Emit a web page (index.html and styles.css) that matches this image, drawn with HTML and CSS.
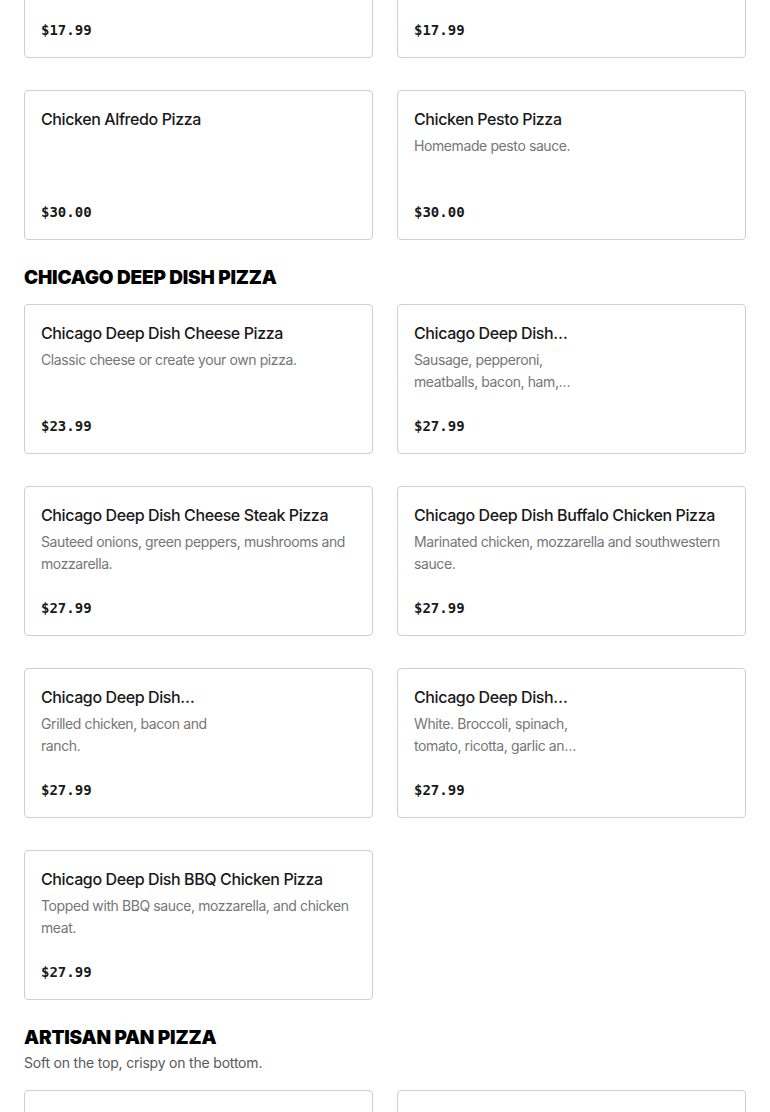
FILE: index.html
```html
<!doctype html>
<html lang="en">
<head>
    <meta charset="UTF-8">
    <meta name="viewport" content="width=device-width, initial-scale=1.0">
    <title>Menu</title>
    <link rel="stylesheet" href="styles.css">
</head>
<body>
<div class="menu">
    <div class="section">
        <div class="grid">
            <div class="item">
                <div class="item-text">
                    <div class="item-name">Veggie Pizza</div>
                    <div class="item-desc">Peppers, onions and olives.</div>
                    <div class="item-price">$17.99</div>
                </div>
            </div>
            <div class="item">
                <div class="item-text">
                    <div class="item-name">Hawaiian Pizza</div>
                    <div class="item-desc">Ham and pineapple.</div>
                    <div class="item-price">$17.99</div>
                </div>
            </div>
            <div class="item">
                <div class="item-text">
                    <div class="item-name">Chicken Alfredo Pizza</div>
                    <div class="item-price">$30.00</div>
                </div>
            </div>
            <div class="item">
                <div class="item-text">
                    <div class="item-name">Chicken Pesto Pizza</div>
                    <div class="item-desc">Homemade pesto sauce.</div>
                    <div class="item-price">$30.00</div>
                </div>
            </div>
        </div>
    </div>

    <div class="section">
        <h2 class="section-title">CHICAGO DEEP DISH PIZZA</h2>
        <div class="grid">
            <div class="item">
                <div class="item-text">
                    <div class="item-name">Chicago Deep Dish Cheese Pizza</div>
                    <div class="item-desc">Classic cheese or create your own pizza.</div>
                    <div class="item-price">$23.99</div>
                </div>
            </div>
            <div class="item has-photo">
                <div class="item-text">
                    <div class="item-name">Chicago Deep Dish…</div>
                    <div class="item-desc">Sausage, pepperoni, meatballs, bacon, ham, and ground beef.</div>
                    <div class="item-price">$27.99</div>
                </div>
                <div class="item-photo"></div>
            </div>
            <div class="item">
                <div class="item-text">
                    <div class="item-name">Chicago Deep Dish Cheese Steak Pizza</div>
                    <div class="item-desc">Sauteed onions, green peppers, mushrooms and mozzarella.</div>
                    <div class="item-price">$27.99</div>
                </div>
            </div>
            <div class="item">
                <div class="item-text">
                    <div class="item-name">Chicago Deep Dish Buffalo Chicken Pizza</div>
                    <div class="item-desc">Marinated chicken, mozzarella and southwestern sauce.</div>
                    <div class="item-price">$27.99</div>
                </div>
            </div>
            <div class="item has-photo">
                <div class="item-text">
                    <div class="item-name">Chicago Deep Dish…</div>
                    <div class="item-desc">Grilled chicken, bacon and ranch.</div>
                    <div class="item-price">$27.99</div>
                </div>
                <div class="item-photo"></div>
            </div>
            <div class="item has-photo">
                <div class="item-text">
                    <div class="item-name">Chicago Deep Dish…</div>
                    <div class="item-desc">White. Broccoli, spinach, tomato, ricotta, garlic and olive oil.</div>
                    <div class="item-price">$27.99</div>
                </div>
                <div class="item-photo"></div>
            </div>
            <div class="item">
                <div class="item-text">
                    <div class="item-name">Chicago Deep Dish BBQ Chicken Pizza</div>
                    <div class="item-desc">Topped with BBQ sauce, mozzarella, and chicken meat.</div>
                    <div class="item-price">$27.99</div>
                </div>
            </div>
        </div>
    </div>

    <div class="section">
        <h2 class="section-title">ARTISAN PAN PIZZA</h2>
        <p class="section-desc">Soft on the top, crispy on the bottom.</p>
        <div class="grid">
            <div class="item">
                <div class="item-text">
                    <div class="item-name">Artisan Pan Cheese Pizza</div>
                    <div class="item-desc">Classic cheese or create your own pizza.</div>
                    <div class="item-price">$15.99</div>
                </div>
            </div>
            <div class="item">
                <div class="item-text">
                    <div class="item-name">Artisan Pan Pepperoni Pizza</div>
                    <div class="item-desc">Cupped pepperoni and mozzarella.</div>
                    <div class="item-price">$17.99</div>
                </div>
            </div>
        </div>
    </div>
</div>
</body>
</html>
```

FILE: styles.css
```css
html, body {
    margin: 0;
    padding: 0;
    background: #fff;
    overflow: hidden;
}

body {
    font-family: Inter, "Liberation Sans", sans-serif;
    color: #191919;
}

/* page is shown scrolled part way down the menu */
.menu {
    margin-top: -108px;
    padding: 0 24px;
}

.section {
    margin-bottom: 24px;
}

.section-title {
    margin: 0;
    padding-top: 2px;
    font-size: 19px;
    line-height: 24px;
    font-weight: 900;
    letter-spacing: -0.2px;
    color: #000;
}

.section-desc {
    margin: 2px 0 0;
    font-size: 14px;
    line-height: 22px;
    letter-spacing: -0.2px;
    color: #595959;
}

.grid {
    margin-top: 14px;
    display: grid;
    grid-template-columns: 349px 349px;
    column-gap: 24px;
    row-gap: 32px;
}

.section:first-child .grid,
.section-desc + .grid {
    margin-top: 16px;
}

.item {
    height: 150px;
    box-sizing: border-box;
    border: 1px solid #cfcfcf;
    border-radius: 4px;
    padding: 16px;
    display: flex;
    gap: 16px;
}

.item-text {
    flex: 1;
    min-width: 0;
    display: flex;
    flex-direction: column;
}

.has-photo .item-text {
    flex: 0 0 168px;
}

.item-photo {
    flex: 1;
}

.item-name {
    font-size: 16px;
    line-height: 24px;
    font-weight: 500;
    letter-spacing: -0.4px;
    white-space: nowrap;
    overflow: hidden;
    text-overflow: ellipsis;
}

.item-desc {
    margin-top: 4px;
    font-size: 14px;
    line-height: 22px;
    letter-spacing: -0.4px;
    color: #767676;
    display: -webkit-box;
    -webkit-line-clamp: 2;
    -webkit-box-orient: vertical;
    overflow: hidden;
}

.item-price {
    margin-top: auto;
    margin-bottom: 1px;
    font-family: "DejaVu Sans Mono", monospace;
    font-size: 14px;
    line-height: 20px;
    font-weight: 700;
}
```
